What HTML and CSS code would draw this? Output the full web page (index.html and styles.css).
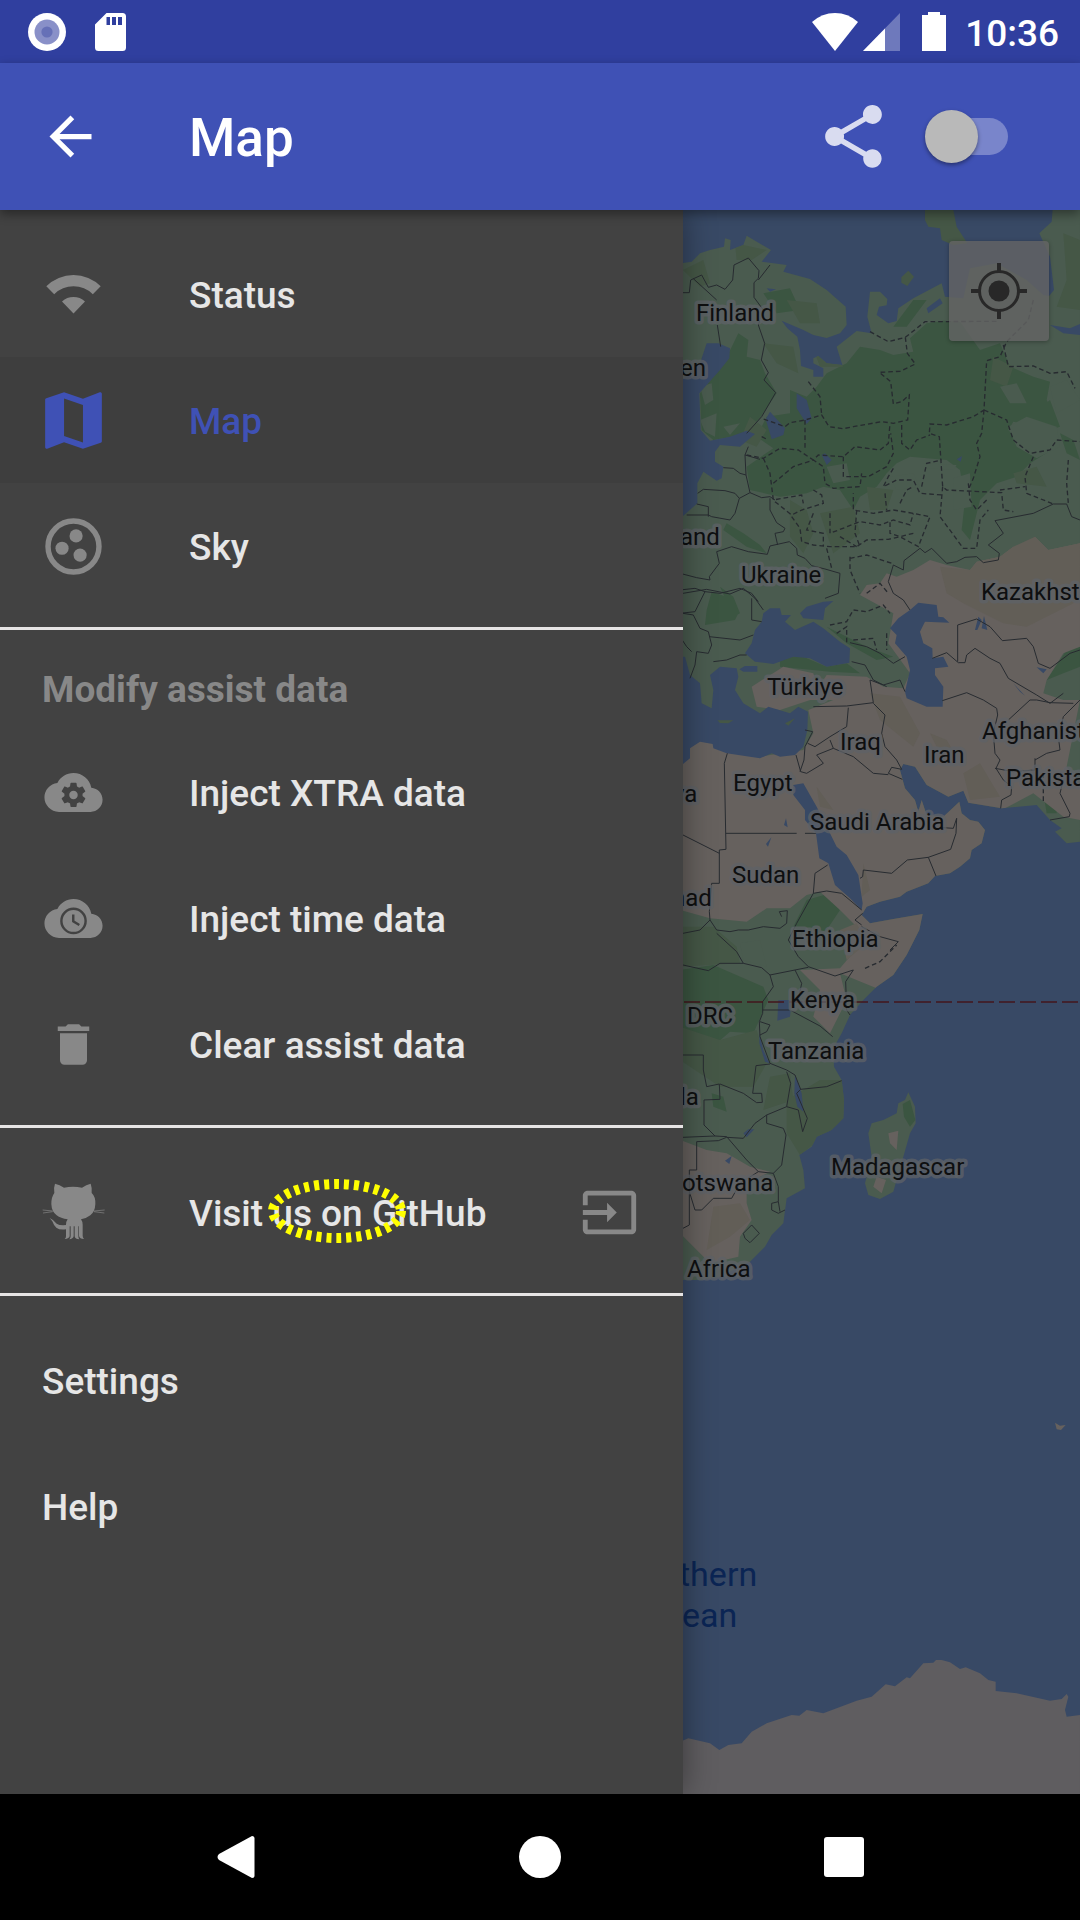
FILE: index.html
```html
<!DOCTYPE html>
<html lang="en">
<head>
<meta charset="utf-8">
<meta name="viewport" content="width=device-width, initial-scale=1">
<title>Map</title>
<link rel="stylesheet" href="styles.css">
</head>
<body>
<div class="screen">
  <div class="status-bar">
    <svg class="status-disc" viewBox="0 0 38 38" aria-hidden="true"><circle cx="19" cy="19" r="19" fill="#fff"/><circle cx="19" cy="19" r="12.5" fill="#8990c8"/><circle cx="19" cy="19" r="5.6" fill="#6670b7"/></svg>
    <svg class="status-sd" viewBox="0 0 31 38" aria-hidden="true"><path fill="#fff" fill-rule="evenodd" d="M11.500 0H27.500Q31 0 31 3.500V34.500Q31 38 27.500 38H3.500Q0 38 0 34.500V11.500ZM11.500 4V12H15V4ZM17 4V12H21V4ZM23 4V12H27V4Z"/></svg>
    <div class="status-right">
      <svg class="status-wifi" viewBox="0 0 46 38" aria-hidden="true"><path fill="#fff" d="M0 9Q10 0 23 0T46 9L23 38Z"/></svg>
      <svg class="status-cell" viewBox="0 0 37 38" aria-hidden="true"><path fill="#fff" opacity=".3" d="M37 0V38H0Z"/><path fill="#fff" d="M22 15.500V38H0Z"/></svg>
      <svg class="status-battery" viewBox="0 0 24 39" aria-hidden="true"><path fill="#fff" d="M6 0H18V3H24V39H0V3H6Z"/></svg>
      <span class="clock">10:36</span>
    </div>
  </div>

  <header class="toolbar">
    <button class="icon-button" type="button" aria-label="Back"><svg class="icon" viewBox="0 0 24 24"><path d="M20 11H7.830l5.590-5.590L12 4l-8 8 8 8 1.410-1.410L7.830 13H20v-2z"/></svg></button>
    <h1 class="title">Map</h1>
    <button class="icon-button share" type="button" aria-label="Share"><svg class="icon" viewBox="2 2 20 20"><path d="M18 16.080c-.76 0-1.440.3-1.960.77L8.910 12.700c.05-.23.09-.46.09-.7s-.04-.47-.09-.7l7.050-4.110c.54.5 1.250.81 2.040.81 1.660 0 3-1.340 3-3s-1.340-3-3-3-3 1.340-3 3c0 .24.04.47.09.7L8.040 9.810C7.500 9.310 6.790 9 6 9c-1.660 0-3 1.340-3 3s1.340 3 3 3c.79 0 1.500-.31 2.040-.81l7.120 4.160c-.05.21-.08.43-.08.65 0 1.610 1.310 2.920 2.920 2.920s2.920-1.310 2.920-2.920-1.310-2.920-2.920-2.920z"/></svg></button>
    <input class="switch" type="checkbox" role="switch" aria-label="GPS">
  </header>

  <main class="content">
    <nav class="drawer">
      <div class="group">
        <a class="item" href="#status"><svg class="icon" viewBox="0 0 63 63"><path d="M4.300 23.300A38.500 38.500 0 0 1 58.700 23.300L50.800 31.200A27.500 27.500 0 0 0 12.200 31.200ZM20 38.500A17 17 0 0 1 43 38.500L31.500 50.500Z"/></svg><span>Status</span></a>
        <a class="item selected" href="#map"><svg class="icon" viewBox="2 2 20 20"><path d="M20.500 3l-.16.030L15 5.100 9 3 3.360 4.900c-.21.070-.36.250-.36.480V20.500c0 .28.22.5.5.5l.16-.03L9 18.900l6 2.100 5.640-1.900c.21-.07.36-.25.36-.48V3.500c0-.28-.22-.5-.5-.5zM15 19l-6-2.110V5l6 2.110V19z"/></svg><span>Map</span></a>
        <a class="item" href="#sky"><svg class="icon" viewBox="1 1 22 22"><circle cx="12" cy="12" r="8.900" fill="none" stroke="currentColor" stroke-width="1.900"/><circle cx="12.900" cy="8.300" r="2.300"/><circle cx="8" cy="12.600" r="2.300"/><circle cx="14.300" cy="15" r="2.300"/></svg><span>Sky</span></a>
      </div>
      <div class="group">
        <h2 class="heading">Modify assist data</h2>
        <button class="item" type="button"><svg class="icon" viewBox="-1 -1 26 26"><path d="M19.350 10.040C18.670 6.590 15.640 4 12 4 9.110 4 6.600 5.640 5.350 8.040 2.340 8.360 0 10.910 0 14c0 3.310 2.690 6 6 6h13c2.760 0 5-2.240 5-5 0-2.640-2.050-4.780-4.650-4.960z"/><path class="cut" transform="translate(6 7) scale(.5)" d="M19.430 12.980c.04-.32.070-.64.070-.98s-.03-.66-.07-.98l2.110-1.650c.19-.15.24-.42.12-.64l-2-3.460c-.12-.22-.39-.3-.61-.22l-2.490 1c-.52-.4-1.080-.73-1.690-.98l-.38-2.650C14.460 2.180 14.250 2 14 2h-4c-.25 0-.46.18-.49.42l-.38 2.650c-.61.25-1.170.59-1.690.98l-2.490-1c-.23-.09-.49 0-.61.22l-2 3.460c-.13.22-.07.49.12.64l2.110 1.650c-.04.32-.07.65-.07.98s.03.66.07.98l-2.110 1.650c-.19.15-.24.42-.12.64l2 3.460c.12.22.39.3.61.22l2.490-1c.52.4 1.080.73 1.690.98l.38 2.650c.03.24.24.42.49.42h4c.25 0 .46-.18.49-.42l.38-2.650c.61-.25 1.170-.59 1.690-.98l2.490 1c.23.09.49 0 .61-.22l2-3.460c.12-.22.07-.49-.12-.64l-2.110-1.650zM12 15.500c-1.930 0-3.500-1.570-3.500-3.500s1.570-3.500 3.500-3.500 3.500 1.570 3.500 3.500-1.570 3.500-3.500 3.500z"/></svg><span>Inject XTRA data</span></button>
        <button class="item" type="button"><svg class="icon" viewBox="-1 -1 26 26"><path d="M19.350 10.040C18.670 6.590 15.640 4 12 4 9.110 4 6.600 5.640 5.350 8.040 2.340 8.360 0 10.910 0 14c0 3.310 2.690 6 6 6h13c2.760 0 5-2.240 5-5 0-2.640-2.050-4.780-4.650-4.960z"/><g class="cut-line"><circle cx="12" cy="13" r="5"/><path d="M11.900 10.300V13.200L14.400 14.700"/></g></svg><span>Inject time data</span></button>
        <button class="item" type="button"><svg class="icon" viewBox="-2 -2 28 28"><path d="M6 19c0 1.100.9 2 2 2h8c1.100 0 2-.9 2-2V7H6v12zM19 4h-3.500l-1-1h-5l-1 1H5v2h14V4z"/></svg><span>Clear assist data</span></button>
      </div>
      <div class="group">
        <a class="item" href="#github"><svg class="icon octocat" viewBox="12 15 189 189"><path d="M51 23Q65 26 78 35Q105 30 132 35Q145 26 158 23Q163 37 161 51Q173 62 172 84Q171 107 157 118Q146 127 129 130Q134 137 134 146V179Q134 185 138 189Q125 189 123 180V151H121V180Q121 187 124 190Q111 190 110 181V151H107V181Q105 189 94 190Q98 185 98 180V151H95V180Q94 188 80 189Q85 185 84 179V160Q65 163 55 155Q47 148 43 136L35 126Q48 132 56 143Q66 149 84 147Q84 136 89 130Q68 127 56 118Q41 107 40 84Q40 63 49 51Q46 37 51 23Z"/><path fill="none" stroke="currentColor" stroke-width="2" d="M14 102L44 105M15 111L44 107M200 102L168 105M199 111L168 107"/></svg><span>Visit us on GitHub</span><svg class="icon trailing" viewBox="-1 -1 26 26"><path d="M21 3.010H3c-1.100 0-2 .9-2 2V9h2V4.990h18v14.030H3V15H1v4.010c0 1.100.9 1.980 2 1.980h18c1.100 0 2-.88 2-1.980v-14c0-1.110-.9-2-2-2zM11 16l4-4-4-4v3H1v2h10v3z"/></svg>
          <svg class="marker" viewBox="0 0 140 66" aria-hidden="true"><ellipse cx="70" cy="33" rx="64" ry="27"/></svg></a>
      </div>
      <div class="group">
        <a class="item" href="#settings"><span>Settings</span></a>
        <a class="item" href="#help"><span>Help</span></a>
      </div>
    </nav>

    <section class="map" aria-label="World map">
      <svg class="world" viewBox="683 210 397 1584" preserveAspectRatio="xMinYMin slice">
        <defs>
          <path id="continent" d="M0 190L35 185 60 160 90 150 132 140 135 115 152 120 150 150 190 135 200 107 273 150 245 185 320 195 310 215 390 237 440 270 497 320 500 375 480 400 440 414 400 405 370 390 305 362 322 385 352 410 360 450 363 498 400 510 400 530 430 530 430 505 400 490 400 475 415 468 440 490 487 495 470 440 530 393 575 400 562 350 570 275 600 275 622 297 620 316 597 320 590 345 625 370 650 363 655 325 700 295 785 250 795 290 850 295 870 205 950 190 1040 240 1090 285 1107 288 1122 270 1110 170 1078 100 1115 65 1120 0 1200 0 1200 372 1170 385 1110 375 1150 400 1200 405 1200 1925 1160 1930 1125 1895 1145 1885 1110 1860 1070 1815 965 1825 865 1808 850 1772 805 1790 740 1755 705 1700 670 1692 660 1710 675 1765 705 1800 715 1835 725 1800 740 1845 790 1850 838 1805 845 1840 870 1860 895 1865 915 1890 905 1930 875 1950 870 1975 840 2000 810 2020 765 2028 745 2050 680 2075 660 2090 600 2105 560 2120 545 2145 570 2170 640 2157 728 2142 718 2190 680 2265 640 2325 590 2360 550 2400 510 2445 485 2500 460 2545 462 2600 485 2640 492 2700 490 2755 455 2790 410 2810 395 2840 358 2865 370 2910 375 2965 320 2995 310 3070 275 3105 255 3140 210 3185 180 3200 120 3230 60 3240 0 3240Z"/>
          <clipPath id="land-clip"><use href="#continent"/></clipPath>
        </defs>
        <rect class="sea" x="683" y="210" width="397" height="1584"/>
        <g transform="translate(680 200) scale(.33333)">
          <use href="#continent" class="light"/>
          <path class="mid" d="M735 30H820L830 80 862 130 820 135 785 120 780 85 745 80 735 60ZM664 232L685 212 702 230 682 258 664 248Z"/>
          <path class="light" d="M685 2677L705 2720 707 2770 690 2800 670 2870 640 2975 600 2997 565 2985 555 2950 575 2870 565 2800 575 2770 610 2760 650 2740 655 2710 675 2700Z"/>
          <path class="sand" d="M625 2800L655 2792 650 2850 630 2830ZM590 2930L618 2940 605 2980 580 2960ZM1125 3668L1140 3677 1157 3675 1143 3690 1130 3688Z"/>
          <path class="dark" d="M668 2712L690 2700 706 2760 690 2780 672 2750Z"/>
          <g clip-path="url(#land-clip)">
            <path class="dark" d="M60 580L100 530 135 482 175 400 205 420 200 470 240 480 255 520 290 580 240 655 200 695 150 712 100 720 65 690ZM440 520L500 490 540 440 600 450 640 465 700 455 690 415 740 370 790 362 840 365 900 450 960 430 990 500 1060 530 1110 545 1100 600 1130 660 1080 680 1000 665 985 690 1020 730 1060 760 1130 740 1050 790 1010 830 950 850 900 900 870 1020 845 990 855 900 840 810 800 780 690 770 650 790 620 820 590 860 540 890 520 930 480 870 430 860 380 880 300 890 210 870 200 800 280 745 230 710 260 650 330 640 330 570 380 590 410 560ZM190 1000L140 970 130 990 200 1040 260 1060 240 1035ZM80 1230L95 1175 140 1190 175 1240 165 1260 75 1275ZM160 1250L120 1160 160 1190 180 1240ZM680 1493L770 1528 835 1498 770 1540 690 1510ZM340 2180L380 2100 450 2080 480 2130 440 2190 380 2210ZM0 2310L100 2295 250 2360 265 2400 220 2500 150 2495 110 2530 0 2480ZM95 2680L130 2690 140 2735 100 2720ZM1160 1350L1200 1340 1200 1400 1150 1420 1100 1440ZM300 1370L370 1370 440 1400 500 1390 540 1420 450 1415 300 1400ZM440 1280L560 1340 640 1370 590 1380 500 1330ZM1090 1780L1130 1790 1130 1840 1100 1840ZM640 380L700 300 740 300 680 380ZM250 280L330 265 360 330 290 340ZM1140 700L1180 720 1200 780 1160 760ZM1060 640L1110 600 1140 680 1080 700Z"/>
            <path class="mid" d="M9 210L70 180 90 250 60 260ZM165 130L260 150 215 180 170 180ZM320 300L410 310 420 370 360 370ZM210 650L260 690 230 740 180 720ZM250 430L340 440 355 520 290 490ZM330 900L380 930 400 1000 370 1060 330 1010ZM420 940L520 920 540 1000 460 1060ZM560 860L640 870 620 930 570 930ZM1000 820L1070 800 1100 860 1010 850ZM1150 100L1200 120 1200 330 1130 320 1160 240ZM0 2180L100 2180 170 2240 180 2290 0 2300ZM0 2480L120 2520 230 2490 260 2590 220 2660 120 2660 0 2580ZM320 2700L420 2640 492 2640 492 2760 360 2865 320 2800ZM270 2630L330 2620 340 2700 250 2730ZM1000 1200L1040 1180 1060 1215 1010 1210ZM390 420L440 430 490 500 420 500ZM940 470L1000 500 980 560 930 540Z"/>
            <path class="sand" d="M540 1185L560 1155 600 1150 620 1120 650 1130 700 1110 750 1080 800 1095 870 1110 890 1085 960 1070 1000 1040 1040 1055 1065 1010 1105 1050 1200 1030 1200 1340 1150 1360 1100 1440 1090 1480 1150 1500 1200 1500 1160 1700 1200 1750 1200 1860 1150 1850 1060 1780 965 1830 900 2320 590 2365 480 2320 500 2400 450 2500 400 2450 420 2370 360 2310 480 2305 560 2210 480 2130 420 2075 380 2085 330 2125 260 2125 200 2165 90 2155 0 2130 0 1600 240 1670 370 1650 400 1600 385 1530 460 1500 390 1500 440 1425 560 1430 610 1460 670 1465 690 1420 625 1330 640 1240ZM215 1460L310 1400 400 1420 420 1490 300 1530 230 1520ZM0 2820L80 2850 140 2860 210 2900 270 2915 200 2950 200 3010 215 3060 180 3110 175 3170 90 3190 0 3100Z"/>
            <path class="dry" d="M780 1100L870 1110 890 1085 960 1070 1000 1040 1065 1010 1105 1050 1200 1030 1200 1200 1040 1280 970 1270 850 1210 800 1180ZM570 1480L660 1490 720 1600 700 1640 600 1560ZM850 1720L900 1690 960 1790 870 1800ZM550 1990L570 2070 545 2090ZM530 2170L560 2230 500 2280 480 2190ZM100 3020L180 3010 210 3060 150 3110 80 3150ZM410 1760L460 1830 420 1820ZM750 1600L800 1620 830 1670 770 1640Z"/>
            <path class="light" d="M60 560L95 550 100 600 75 615ZM60 660L110 640 105 710 75 695ZM130 680L180 670 150 705ZM985 680L1040 650 1130 680 1140 740 1070 775 1010 740ZM440 800L500 790 510 840 460 850ZM630 830L700 820 720 860 650 870ZM820 835L870 820 875 920 820 930ZM730 790L830 795 820 810 740 805ZM1110 560L1160 540 1200 600 1130 640ZM960 560L1010 550 1040 610 990 610ZM180 2230L240 2220 260 2300 190 2280Z"/>
          </g>
          <g class="sea">
            <path d="M340 1755L370 1750 410 1820 450 1900 470 1940 500 1965 535 2025 548 2110 545 2130 510 2095 465 2055 445 1990 418 1975 408 1900 375 1860 375 1830 340 1785Z"/>
            <path d="M0 1370L15 1370 30 1425 60 1450 65 1510 95 1525 100 1470 90 1425 120 1400 170 1405 175 1430 165 1470 190 1510 240 1540 265 1520 330 1540 355 1520 384 1535 382 1590 370 1640 345 1665 300 1670 275 1660 240 1675 140 1660 100 1645 98 1632 60 1625 30 1645 30 1675 9 1692 0 1692ZM178 1408L195 1398H232V1415H190Z"/>
            <path d="M245 1265L250 1240 270 1225 300 1225 305 1245 333 1245 315 1265 345 1290 400 1265 430 1285 480 1325 510 1345 508 1388 440 1400 390 1375 340 1370 280 1392 225 1385 195 1360 215 1330 225 1290ZM360 1240L380 1220 430 1205 460 1203 435 1225 430 1260 370 1255Z"/>
            <path d="M630 1285L655 1255 690 1230 715 1208 770 1215 775 1250 790 1252 808 1268 735 1265 720 1295 730 1330 757 1345 758 1375 790 1370 805 1400 765 1405 765 1425 790 1460 788 1520 740 1520 680 1495 675 1475 690 1410 680 1370 645 1330 650 1305Z"/>
            <path d="M0 545L60 490 80 430 115 430 150 445 148 475 120 510 58 580 62 690 90 722 150 710 200 692 225 702 180 740 120 735 105 755 105 785 130 800 125 835 110 842 70 815 52 850 52 910 9 948 0 950Z"/>
            <path d="M257 658L270 635 315 685 310 705 275 718ZM350 580L380 600 395 655 380 672 350 625ZM425 765L435 760 455 780 440 795ZM830 778L846 768 842 785ZM260 265L288 268 270 275ZM740 325L780 295 788 310 745 340ZM885 1290L895 1250 905 1260 892 1290ZM912 1248L922 1290 905 1285ZM1000 1450L1035 1487 1020 1475ZM295 2400H335L330 2450 292 2462ZM238 2500L250 2550 268 2590 255 2585 238 2530ZM345 2625L365 2680 370 2735 352 2720 343 2680ZM190 2800L205 2788 223 2788 200 2812ZM135 2882L155 2868 148 2892ZM312 1875L318 1855 323 1882ZM258 1932L274 1912 264 1940ZM1070 1402L1100 1408 1090 1420Z"/>
          </g>
          <path class="ice" d="M0 4625L25 4615 90 4630 118 4650 145 4635 185 4630 215 4595 260 4570 335 4545 358 4547 380 4530 430 4540 530 4502 575 4490 617 4453 645 4459 680 4432 690 4435 730 4390 760 4388 768 4380 785 4380 810 4387 840 4407 857 4402 900 4420 925 4440 947 4445 947 4473 1010 4480 1110 4502 1145 4497 1160 4482 1165 4490 1155 4530 1160 4550 1200 4545 1200 4800 0 4800Z"/>
          <path class="mid" d="M112 1561L160 1561 145 1570 120 1569ZM315 1570L345 1555 325 1577Z"/>
          <path class="border" d="M9 278L28 278 32 240 65 225 85 262 110 255 135 268 158 240 162 195 205 174 237 212 235 235 222 248 222 292 250 330 235 375 254 430 244 480 265 518 252 540 287 578 245 650 200 700M110 300L40 236M112 375L122 440M235 240L270 195M53 880L70 868 135 872 165 880 178 895 210 878 245 893 270 890 285 900M178 895L165 940 150 960 95 950 85 945 20 945M85 950V920L50 912M130 803L160 805 180 820 198 825 195 765 205 740 M198 825L210 878M195 765L240 778M270 895V930L290 968 315 985 310 995 285 1000 293 1035 M110 1055L155 1040 205 1055 262 1063 270 1038 328 1025 350 1045 352 1065 375 1075 395 1097 435 1107 480 1120 475 1180 435 1195M110 1055L118 1090 88 1130 90 1140 50 1133 0 1120M0 1170L45 1165 75 1175 120 1180 180 1165 215 1180 235 1205M0 1240L45 1235 75 1175M88 1310L180 1320 220 1305M9 1180L80 1168 150 1182 190 1165 225 1195 250 1230M215 1195V1260L245 1265M9 1240L40 1245 60 1285 85 1295 95 1335 85 1360 50 1355 45 1395 30 1435M100 1385L140 1380 180 1365 200 1365M0 1310L20 1340 35 1355M640 1095L670 1110 672 1082 720 1045 735 1058 755 1045 800 1090 830 1085 855 1072 890 1070 910 1088 955 1080 958 1060 925 1035 970 1000 945 962 1060 940 1120 912 1160 912 1175 950 1200 960M640 1095L625 1145 640 1180 670 1200 690 1230M833 1385V1275L890 1257 930 1280 967 1322 1040 1315 1060 1340 1075 1390 1110 1405 1170 1360 1200 1350M757 1375L800 1358 835 1388 855 1388 860 1365 885 1345 930 1375 960 1390 985 1435 1070 1485 1110 1510 1150 1480M787 1502L860 1478 910 1500 950 1525 953 1545 940 1600 945 1660 960 1680 948 1705 970 1740 995 1760 993 1785 965 1800 962 1825M985 1560L1050 1500 1070 1500 1110 1508 1180 1510M1065 1680L1100 1660 1140 1650 1135 1610 1150 1550 1200 1500M945 1705L1000 1715 1065 1710V1675M1150 1740L1140 1780 1170 1840 1168 1850 1110 1860M400 1520L500 1518 580 1508 570 1440 610 1455 660 1440 675 1475M505 1523L500 1580 450 1610 405 1640 383 1630M450 1620L460 1645 410 1665 430 1690 380 1720 362 1715 348 1665M580 1510L615 1545 605 1600 615 1640 650 1680 665 1708 635 1702 625 1720 667 1738M460 1645L520 1670 580 1720 625 1724M375 1590L398 1595 375 1640 372 1680 360 1715M515 1385L555 1395 580 1440 620 1460M510 1328L560 1340 600 1360 640 1390 675 1370M787 1883L820 1885 830 1855 828 1900 812 1948 745 1972 682 1980 635 2020 550 2010 548 2030 540 2035M745 1972L768 2028M142 1660L133 1690 138 1948 118 1950V2050H95M138 1900H350M375 1900H408M9 1905L118 1960M95 2050L88 2135 90 2160 110 2190 150 2195 175 2190 205 2190 250 2180 300 2185 320 2170 322 2132 298 2135 305 2150M400 2080L405 2020 443 1995M400 2080L350 2170 325 2220 355 2270 385 2300 465 2328 520 2310 497 2345 500 2430 510 2445M400 2080L440 2073 485 2080 545 2130M548 2140L525 2160 545 2175M545 2180L600 2210 655 2225 630 2250M9 2200L60 2190 90 2160M110 2200L170 2255 190 2290 120 2290 85 2312 9 2295M190 2290L245 2303 270 2325 280 2360 248 2405V2440L238 2465 240 2510 270 2590 320 2610 345 2625 362 2668 440 2660 485 2642M270 2325L345 2310 385 2302M345 2310L365 2350 355 2400M248 2430L270 2430H330L420 2478 458 2510M240 2465L270 2475 260 2495 240 2505M9 2565H70V2610L80 2660 118 2652 120 2698 72 2700V2775L105 2808 9 2812M120 2652L190 2680 230 2708 247 2707 245 2680 218 2680 228 2597 270 2592M320 2615L332 2650 320 2720 260 2745V2770L310 2785 318 2805 305 2895 280 2920 235 2915 200 2880 140 2810 105 2808M260 2745L225 2770 190 2815 140 2812M320 2720L355 2730 368 2795 382 2755 350 2680 362 2668M9 3085L28 3075V2910H50V2825L115 2822 140 2812M28 2975L45 3030 65 3030 100 2995 155 2995 180 2950 235 2915M280 2920L295 2960V3005L275 3010 275 3030 295 3040 315 3030M295 3005L300 3035M190 3100L215 3075 238 3100 210 3128 195 3115Z"/>
          <path class="region" d="M570 395L625 425 676 412 682 460 706 492 660 514 598 517 632 545 640 612 665 605 688 585 683 660 640 670 605 665 520 680 490 686 447 680 425 645 375 660 330 668 315 680 245 655M676 412L735 365 955 364M1060 300L1045 360 980 425 960 470 920 482 912 630 880 650 800 675 750 672 748 700 778 710 788 860 800 870 965 878 970 930 1000 935M970 435L985 500 1060 498 1110 520 1160 515 1185 565M385 545L420 590 425 645M375 660V745M245 710L265 720M200 765L250 775 300 745 355 750 400 780 415 765 490 770 525 740 600 750 625 730 630 670M250 775L270 820 280 900 365 885 370 910M280 850L340 800 400 780 430 800 435 850 460 865 540 860 545 820M490 770V830L565 830 620 800 640 760 632 700M665 675V730L690 750 710 720 750 705M640 805L625 830 610 860 650 840 700 840 720 880 788 885M725 860L740 790 785 780M788 860L780 950 850 1045 890 1045 900 960 925 930M865 850L870 900 890 930 920 900M912 630L905 700 890 730 900 770 880 835 865 870M912 630L980 660 1000 720 1050 760 1110 750 1130 720 1200 725M1060 770L1035 830 1040 880 1120 912M960 870L1035 860M1165 780L1160 850 1165 910M285 905L335 945 365 930 430 910 425 885 400 870M335 950L360 985 365 1025 400 1035 450 1040 530 1040 560 1020 625 1018 660 1010 715 1040 750 950 700 940 640 930 580 940 520 930 520 880M400 940L380 990 430 1000 430 1040M450 940V1000L540 965 600 975 640 960 690 975 700 940M480 1010L530 1040M530 930L525 1000 540 1040M615 880L620 930M660 910L680 870 700 860M700 1000L660 1010 630 1000V960M440 1045L455 1105M510 1070L510 1110 540 1180M510 1075L560 1065 635 1090M450 1275L500 1265 520 1230 560 1235 610 1215 630 1240M470 1300L500 1280 500 1330M520 1320L580 1315 590 1350M620 1300V1350M560 1180L600 1150 625 1180M1090 1720V1810M555 2305L600 2285 650 2235"/>
          <path class="equator" d="M12 2406H1200"/>
        </g>
        <g class="labels">
          <text x="696" y="321">Finland</text><text x="680" y="376">en</text><text x="680" y="545">and</text>
          <text x="741" y="583">Ukraine</text><text x="981" y="600">Kazakhstan</text><text x="767" y="695">Türkiye</text>
          <text x="840" y="750">Iraq</text><text x="924" y="763">Iran</text><text x="982" y="739">Afghanistan</text>
          <text x="1006" y="786">Pakistan</text><text x="733" y="791">Egypt</text><text x="673" y="802">ya</text>
          <text x="810" y="830">Saudi Arabia</text><text x="732" y="883">Sudan</text><text x="672" y="906">had</text>
          <text x="792" y="947">Ethiopia</text><text x="790" y="1008">Kenya</text><text x="687" y="1024">DRC</text>
          <text x="768" y="1059">Tanzania</text><text x="680" y="1105">la</text><text x="831" y="1175">Madagascar</text>
          <text x="682" y="1191">otswana</text><text x="687" y="1277">Africa</text>
        </g>
        <g class="ocean-label"><text x="679" y="1586">thern</text><text x="682" y="1627">ean</text></g>
      </svg>
      <button class="locate" type="button" aria-label="My location"><svg viewBox="0 0 60 60"><circle cx="30" cy="30" r="19.500" fill="none" stroke="#282828" stroke-width="3"/><circle cx="30" cy="30" r="10.500" fill="#282828"/><path stroke="#282828" stroke-width="4" d="M30 2V10M30 50V58M2 30H10M50 30H58"/></svg></button>
    </section>
  </main>

  <footer class="system-nav">
    <button type="button" aria-label="System back"><svg viewBox="0 0 42 42"><path fill="#fff" d="M37 0Q39.500 0 39.500 2.500V39.500Q39.500 42 37 42L4 24Q1 21 4 18Z"/></svg></button>
    <button type="button" aria-label="Home"><svg viewBox="0 0 42 42"><circle cx="21" cy="21" r="21" fill="#fff"/></svg></button>
    <button type="button" aria-label="Recent apps"><svg viewBox="0 0 42 42"><rect x="1" y="1" width="40" height="40" rx="3" fill="#fff"/></svg></button>
  </footer>
</div>
</body>
</html>
```
FILE: styles.css
```css
* { box-sizing: border-box; }

body {
  margin: 0;
  background: #000;
  font-family: Roboto, "Liberation Sans", sans-serif;
  font-weight: 500;
}

button {
  padding: 0;
  border: 0;
  background: none;
  font: inherit;
  color: inherit;
  cursor: pointer;
}

svg { display: block; }

.screen {
  display: flex;
  flex-direction: column;
  min-height: 100vh;
}

.icon {
  flex: none;
  width: 63px;
  height: 63px;
  fill: currentColor;
  overflow: visible;
}

/* Status bar */
.status-bar {
  display: flex;
  align-items: center;
  height: 63px;
  padding: 0 21px 0 28px;
  background: #303f9f;
  color: #fff;
}
.status-disc { width: 38px; height: 38px; }
.status-sd { width: 31px; height: 38px; margin-left: 29px; }
.status-right { display: flex; align-items: center; margin-left: auto; }
.status-wifi { width: 46px; height: 38px; }
.status-cell { width: 37px; height: 38px; margin-left: 5px; }
.status-battery { width: 24px; height: 39px; margin: 0 19px 0 22px; }
.clock { font-size: 37px; line-height: 63px; padding-top: 3px; }

/* App bar */
.toolbar {
  position: relative;
  z-index: 2;
  display: flex;
  align-items: center;
  height: 147px;
  padding: 0 72px 0 39px;
  background: #3f51b5;
  color: #fff;
  box-shadow: 0 4px 10px rgba(0, 0, 0, .4);
}
.title {
  margin: 0 auto 0 87px;
  padding-top: 4px;
  font-size: 53px;
  line-height: 63px;
  font-weight: 500;
}
.share { color: #d9dcf0; }
.switch {
  appearance: none;
  display: flex;
  align-items: center;
  position: relative;
  width: 83px;
  height: 53px;
  margin: 0 0 0 40px;
}
.switch::before {
  content: "";
  width: 79px;
  height: 37px;
  margin-left: 4px;
  border-radius: 19px;
  background: #7985cb;
}
.switch::after {
  content: "";
  position: absolute;
  left: 0;
  top: 0;
  width: 53px;
  height: 53px;
  border-radius: 50%;
  background: #b9b9b9;
  box-shadow: 0 2px 4px rgba(0, 0, 0, .4);
}

/* Drawer */
.content { display: flex; flex: 1; }
.drawer {
  position: relative;
  z-index: 1;
  flex: 0 1 683px;
  background: #424242;
  color: #e6e6e6;
  font-size: 37px;
  line-height: 42px;
  box-shadow: 0 0 30px rgba(0, 0, 0, .4);
}
.group { padding: 21px 0 18px; }
.group + .group { border-top: 3px solid #e6e4e4; }
.item {
  position: relative;
  display: flex;
  align-items: center;
  gap: 84px;
  width: 100%;
  height: 126px;
  padding: 0 42px;
  color: inherit;
  text-align: left;
  text-decoration: none;
}
.item span { padding-top: 4px; }
.item .icon { color: #888; }
.item.selected { background: #3e3e3e; color: #3f51b5; }
.item.selected .icon { color: #3f51b5; }
.item .trailing { margin-left: auto; }
.cut { fill: #424242; }
.cut-line { fill: none; stroke: #424242; stroke-width: 1; }
.heading {
  margin: 0;
  padding: 18px 42px;
  color: #888;
  font-size: 37px;
  line-height: 42px;
  font-weight: 700;
}
.marker {
  position: absolute;
  left: 267px;
  top: 29px;
  width: 140px;
  height: 66px;
  fill: none;
  stroke: #ff0;
  stroke-width: 10;
  stroke-dasharray: 5 5;
}

/* Map */
.map {
  position: relative;
  flex: 1;
  overflow: hidden;
  background: #384965;
}
.world { position: absolute; inset: 0; width: 100%; height: 100%; }
.sea { fill: #384965; }
.light { fill: #4a5b4f; }
.mid { fill: #455746; }
.dark { fill: #3b5541; }
.sand { fill: #66615e; }
.dry { fill: #625e57; }
.ice { fill: #5f5d60; }
.border { fill: none; stroke: #272b30; stroke-width: 3; }
.region { fill: none; stroke: #272b30; stroke-width: 4; stroke-dasharray: 14 9; }
.equator { stroke: #43161d; stroke-width: 5; stroke-dasharray: 48 15; }
.labels {
  font-size: 24px;
  font-weight: 400;
  fill: #0e0f10;
  stroke: rgba(94, 98, 103, .75);
  stroke-width: 7px;
  stroke-linejoin: round;
  paint-order: stroke;
}
.ocean-label { font-size: 34px; font-weight: 400; fill: #0b2554; }
.locate {
  position: absolute;
  top: 31px;
  right: 31px;
  display: grid;
  place-items: center;
  width: 100px;
  height: 100px;
  border-radius: 4px;
  background: rgba(100, 100, 100, .8);
  box-shadow: 0 1px 4px rgba(0, 0, 0, .3);
}
.locate svg { width: 60px; height: 60px; }

/* System navigation */
.system-nav {
  position: relative;
  z-index: 3;
  display: grid;
  grid-template-columns: repeat(3, 1fr);
  height: 126px;
  padding: 0 84px;
  background: #000;
}
.system-nav button { display: grid; place-items: center; }
.system-nav svg { width: 42px; height: 42px; }
```
